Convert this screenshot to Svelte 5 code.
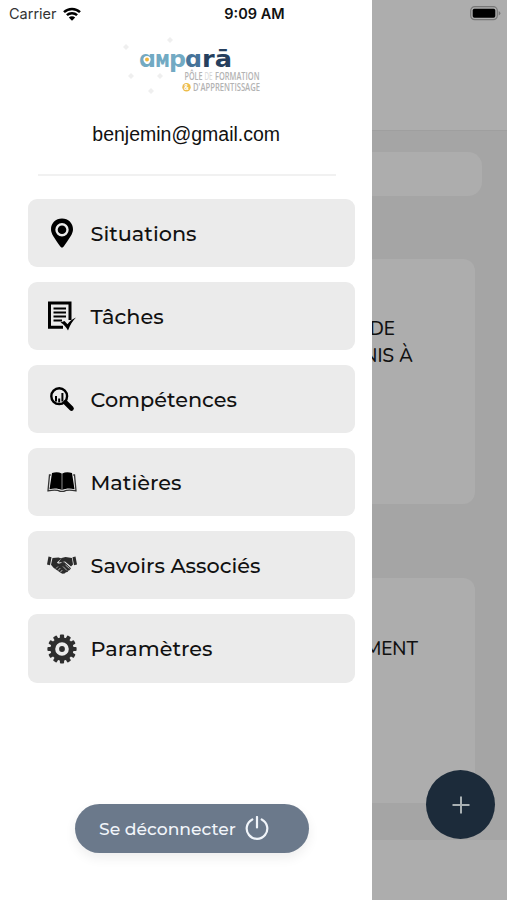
<script lang="ts">
  type Icon = "pin" | "tasks" | "search" | "book" | "hands" | "gear";

  interface MenuItem {
    label: string;
    icon: Icon;
  }

  const items: MenuItem[] = [
    { label: "Situations", icon: "pin" },
    { label: "Tâches", icon: "tasks" },
    { label: "Compétences", icon: "search" },
    { label: "Matières", icon: "book" },
    { label: "Savoirs Associés", icon: "hands" },
    { label: "Paramètres", icon: "gear" },
  ];

  const teeth = Array.from({ length: 12 }, (_, i) => i * 30);
  const dots = [
    [60, 10], [16, 17], [21, 46], [50, 46], [41, 61],
  ];
</script>

<div class="screen">
  <div class="page">
    <header class="topbar"></header>
    <main class="content">
      <div class="searchbox"></div>
      <article class="card first">
        <p class="line-a">DE</p>
        <p class="line-b">NIS À</p>
      </article>
      <article class="card second">
        <p class="line-c">MENT</p>
      </article>
    </main>
    <footer class="tabbar"></footer>
  </div>

  <div class="fab">
    <svg width="18" height="18" viewBox="0 0 18 18">
      <path d="M9 .5v17M.5 9h17" stroke="#a9b1b3" stroke-width="2" />
    </svg>
  </div>

  <aside class="drawer">
    <svg class="logo" width="170" height="70" viewBox="0 0 170 70">
      <g fill="#efefef">
        {#each dots as [x, y]}
          <path d="M{x} {y - 3}l3 3-3 3-3-3z" />
        {/each}
      </g>
      <g class="brand">
        <text x="29" y="36.500" textLength="17" lengthAdjust="spacingAndGlyphs" fill="#72aac3">ɑ</text>
        <text x="45" y="36.500" textLength="15" lengthAdjust="spacingAndGlyphs" fill="#72aac3">ᴍ</text>
        <text x="59" y="36.500" textLength="17" lengthAdjust="spacingAndGlyphs" fill="#72aac3">p</text>
        <text x="75" y="36.500" textLength="17" lengthAdjust="spacingAndGlyphs" fill="#46749a">ɑ</text>
        <text x="92" y="36.500" textLength="30" lengthAdjust="spacingAndGlyphs" fill="#263f5e">rā</text>
      </g>
      <circle cx="37" cy="29.500" r="3.600" fill="#fff" />
      <circle cx="37" cy="29.500" r="2" fill="#f0b63c" />
      <g class="tagline">
        <text x="74.500" y="50" textLength="18" lengthAdjust="spacingAndGlyphs">PÔLE</text>
        <text class="thin" x="94.500" y="50" textLength="8" lengthAdjust="spacingAndGlyphs">DE</text>
        <text x="105" y="50" textLength="44.500" lengthAdjust="spacingAndGlyphs">FORMATION</text>
        <text x="83" y="61" textLength="67" lengthAdjust="spacingAndGlyphs">D'APPRENTISSAGE</text>
      </g>
      <circle cx="76.500" cy="57.300" r="4.200" fill="#edbd4c" />
      <text class="amp" x="74" y="60">&amp;</text>
    </svg>

    <div class="email">benjemin@gmail.com</div>
    <hr />

    <nav>
      {#each items as item (item.label)}
        <div class="item">
          <svg class="icon" width="30" height="32" viewBox="0 0 30 32">
            {#if item.icon === "pin"}
              <path fill-rule="evenodd" d="M15 1.500C8.700 1.500 4 6.200 4 12.300c0 4.500 3.200 8.500 9.300 17.200q1.700 2.300 3.400 0C22.800 20.800 26 16.800 26 12.300 26 6.200 21.300 1.500 15 1.500zM15 6a6.700 6.700 0 1 1 0 13.400A6.700 6.700 0 0 1 15 6z" />
              <circle cx="15" cy="12.700" r="4.300" />
            {:else if item.icon === "tasks"}
              <path d="M16 27.300H2.500V3H23v17" fill="none" stroke="#000" stroke-width="3" />
              <path d="M6.500 8.500H19M6.500 12.500H19M6.500 16.500H19M6.500 20.500H15" stroke="#000" stroke-width="2.200" />
              <path d="m13.500 22.500 4-1.500 3 3.300c2-2.800 4.300-5 8.500-6.800-3.500 3.500-6 7.500-8 13-2-3.500-4-6-7.500-8z" />
            {:else if item.icon === "search"}
              <circle cx="12.200" cy="13.200" r="7.900" fill="none" stroke="#000" stroke-width="2.400" />
              <path d="m18.500 19.500 6 6" stroke="#000" stroke-width="4.600" stroke-linecap="round" />
              <path d="M8 13h2v5.500H8zM11.200 15.500h2v4h-2zM14.400 10h2v8.500h-2z" />
            {:else if item.icon === "book"}
              <path d="M5 7c3.800-1.200 6.800-1 9.700.5v16.500c-3.500-1.800-7.700-2-12.200-.8zM25 7c-3.800-1.200-6.800-1-9.700.5v16.500c3.500-1.800 7.700-2 12.200-.8z" />
              <path d="M3.800 9H2.500L1 24.800c5-.9 9.800-.9 12.300.6h3.400c2.500-1.500 7.300-1.500 12.300-.6L27.500 9h-1.300" fill="none" stroke="#333" stroke-width="1.300" />
            {:else if item.icon === "hands"}
              <g fill="#2b2b2b">
                <path d="m1.500 7.500 3 .8-1.500 8-3-.8zM28.500 7.500l-3 .8 1.500 8 3-.8z" />
                <path d="M5.500 9 11.500 8.500l3 1-4.500 4c1 2 3.500 1 5-.5l2.500.2 6.500 6-1.500 2-1 .2-1 1.600-1.500.2-1.500 1.300-2 .3-2-1-7-5-2.500-3z" />
                <path d="m14.500 9 4-1 6.500 1 1 6.500-2 2-6-5-4 .8-2.500.2z" />
              </g>
              <path d="m9 19.500 2-2M11 21.500l2.300-2.500M13.300 23.300l2-2.300M16 17.500l4 4M18.500 16l4 3.500" stroke="#ebebeb" stroke-width=".7" />
            {:else}
              <g fill="#2e2e2e">
                {#each teeth as angle}
                  <rect x="12.900" y="1.400" width="4.200" height="5" rx="1" transform="rotate({angle} 15 16)" />
                {/each}
              </g>
              <circle cx="15" cy="16" r="9.200" fill="none" stroke="#2e2e2e" stroke-width="4.800" />
              <circle cx="15" cy="16" r="2.900" fill="#2e2e2e" />
            {/if}
          </svg>
          <span>{item.label}</span>
        </div>
      {/each}
    </nav>

    <button class="logout">
      <span>Se déconnecter</span>
      <svg width="24" height="24" viewBox="0 0 24 24">
        <path d="M7.300 3.400a10.300 10.300 0 1 0 9.400 0M12 1v10.500" fill="none" stroke="#f1f5fa" stroke-width="2.200" stroke-linecap="round" />
      </svg>
    </button>
  </aside>

  <div class="status">
    <div class="carrier">
      <span>Carrier</span>
      <svg width="18" height="14" viewBox="0 0 18 14">
        <path d="M1 5.200a11.500 11.500 0 0 1 16 0M3.900 8.200a7.400 7.400 0 0 1 10.200 0" fill="none" stroke="#000" stroke-width="2.500" />
        <path d="M9 13.800 5.800 10.500a4.600 4.600 0 0 1 6.400 0z" />
      </svg>
    </div>
    <span class="time">9:09 AM</span>
    <svg class="battery" width="31" height="15" viewBox="0 0 31 15">
      <rect x=".7" y=".7" width="26.600" height="13" rx="4" fill="none" stroke="#777" stroke-width="1.200" />
      <rect x="2.700" y="2.700" width="22.600" height="9" rx="1.700" />
      <path d="M28.700 5v4.500q1.700-1 1.700-2.300T28.700 5z" fill="#777" />
    </svg>
  </div>
</div>

<style>
  :global(body) {
    margin: 0;
  }
  .screen {
    position: relative;
    width: 507px;
    height: 900px;
    overflow: hidden;
    font-family: Montserrat, Inter, sans-serif;
    color: #111;
  }
  .page {
    height: 100%;
    display: flex;
    flex-direction: column;
    background: #a5a5a5;
  }
  .topbar {
    height: 130px;
    background: #adadad;
    border-bottom: 1px solid #9f9f9f;
  }
  .content {
    flex: 1;
    padding: 21px 32px 0 25px;
  }
  .searchbox {
    height: 44px;
    margin-right: -7px;
    border-radius: 14px;
    background: #adadad;
  }
  .card {
    box-sizing: border-box;
    border-radius: 12px;
    background: #adadad;
    font: 500 19px/27px Nunito, "Open Sans", sans-serif;
    text-align: right;
  }
  .card p {
    margin: 0;
  }
  .line-a {
    padding-right: 80px;
  }
  .line-b {
    padding-right: 62px;
  }
  .line-c {
    padding-right: 57px;
  }
  .first {
    height: 245px;
    margin-top: 63px;
    padding-top: 57px;
  }
  .second {
    height: 225px;
    margin-top: 74px;
    padding-top: 58px;
  }
  .tabbar {
    height: 60px;
    background: #adadad;
  }
  .fab {
    position: absolute;
    left: 426px;
    top: 770px;
    width: 69px;
    height: 69px;
    display: grid;
    place-items: center;
    border-radius: 50%;
    background: #1c2b3a;
  }
  .drawer {
    position: absolute;
    inset: 0 auto 0 0;
    width: 372.400px;
    display: flex;
    flex-direction: column;
    background: #fff;
  }
  .logo {
    flex: none;
    margin: 30px 0 0 110px;
  }
  .brand {
    font: 700 23px "DejaVu Sans", sans-serif;
  }
  .tagline {
    font: 600 10.500px "Open Sans", sans-serif;
    fill: #b3b3b3;
  }
  .thin {
    font-weight: 400;
    fill: #d5d5d5;
  }
  .amp {
    font: 700 7px Inter, sans-serif;
    fill: #fff;
  }
  .email {
    margin-top: 22px;
    font: 19.500px/24px "Liberation Sans", sans-serif;
    text-align: center;
  }
  hr {
    width: 298px;
    height: 2px;
    margin: 28px 0 0 38px;
    border: 0;
    background: #f1f1f1;
  }
  nav {
    display: flex;
    flex-direction: column;
    gap: 15px;
    margin: 23px 0 0 28px;
  }
  .item {
    display: flex;
    align-items: center;
    gap: 13.500px;
    box-sizing: border-box;
    width: 327.400px;
    height: 68.100px;
    padding-left: 19px;
    border-radius: 9px;
    background: #ebebeb;
    font-size: 20.800px;
    font-weight: 500;
    white-space: nowrap;
  }
  .logout {
    display: flex;
    align-items: center;
    gap: 9px;
    box-sizing: border-box;
    width: 234px;
    height: 49px;
    margin: 121px 0 0 75px;
    padding: 0 0 0 24px;
    border: 0;
    border-radius: 25px;
    background: #6b798b;
    box-shadow: 0 5px 12px rgba(0, 0, 0, 0.07);
    color: #f1f5fa;
    font: 500 17.200px Montserrat, Inter, sans-serif;
  }
  .logout span {
    white-space: nowrap;
  }
  .status {
    position: absolute;
    inset: 0 0 auto;
    height: 27px;
    display: grid;
    grid-template-columns: 1fr auto 1fr;
    align-items: center;
    padding: 0 7px 0 9px;
    font-family: Inter, sans-serif;
    font-size: 14.500px;
  }
  .carrier {
    display: flex;
    align-items: center;
    gap: 6px;
    color: #333;
  }
  .time {
    font-weight: 600;
  }
  .battery {
    justify-self: end;
    margin-right: -1px;
  }
</style>
